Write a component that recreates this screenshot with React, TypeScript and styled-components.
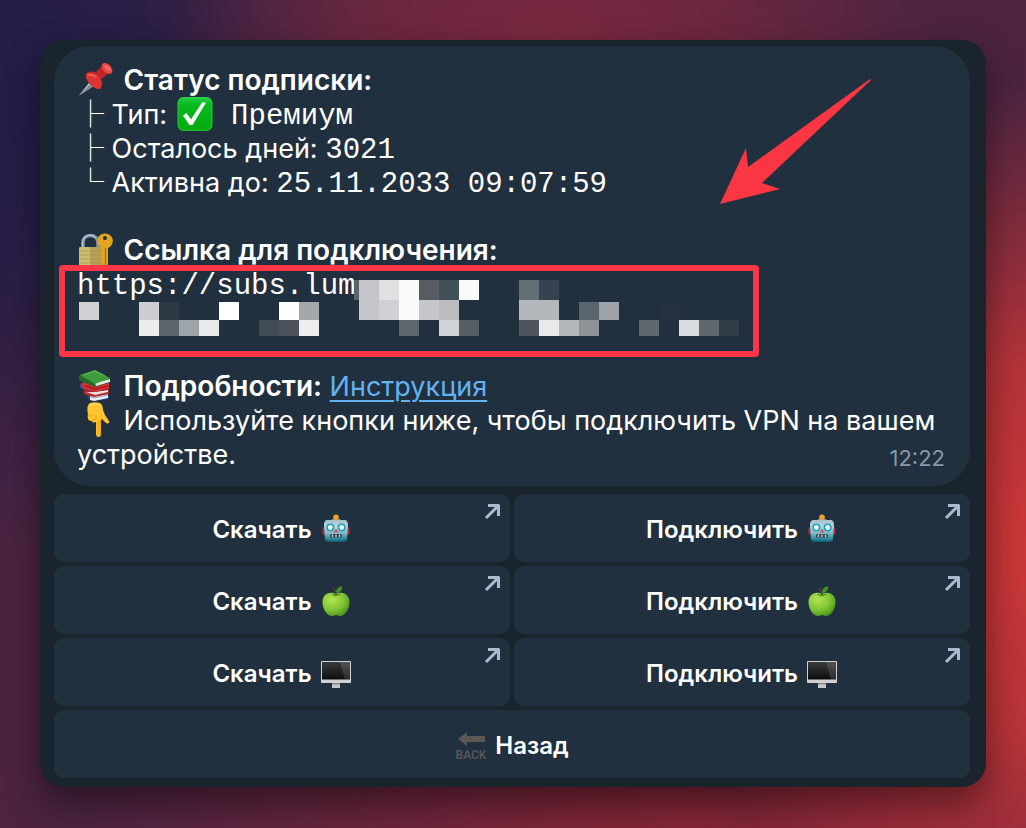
import React from "react";
import styled, { createGlobalStyle } from "styled-components";

const GlobalStyle = createGlobalStyle`
  * { box-sizing: border-box; }
  html, body { margin: 0; }
  body {
    font-family: Inter, "Noto Sans", sans-serif;
    color: #ffffff;
    background: #48223e;
  }
`;

const Desktop = styled.main`
  min-height: 100vh;
  padding: 40px;
  background:
    radial-gradient(ellipse 34% 56% at 101% 66%, #cd3737 0%, rgba(205, 55, 55, 0.8) 40%, rgba(205, 55, 55, 0) 100%),
    radial-gradient(ellipse 38% 60% at 54% 12%, #7c293e 0%, rgba(124, 41, 62, 0.7) 40%, rgba(124, 41, 62, 0) 100%),
    radial-gradient(ellipse 32% 56% at 2% 12%, #221d47 0%, rgba(34, 29, 71, 0.8) 40%, rgba(34, 29, 71, 0) 100%),
    radial-gradient(ellipse 60% 40% at 68% 104%, #8c2636 0%, rgba(140, 38, 54, 0) 100%),
    #4c2441;
`;

const Window = styled.section`
  padding: 6px 16px 9px 14px;
  border-radius: 24px;
  background: #19242d;
  box-shadow: 0 16px 36px rgba(0, 0, 0, 0.45);
`;

const Message = styled.article`
  position: relative;
  padding: 18px 23px 14px;
  border-radius: 36px;
  background: #21303f;
  font-size: 27px;
  line-height: 34px;
`;

const Block = styled.div`
  position: relative;
  margin-bottom: 34px;
`;

const Line = styled.p`
  margin: 0;
`;

const Strong = styled.strong`
  font-size: 28px;
  font-weight: 600;
  line-height: 1;
`;

const Mono = styled.code`
  font-family: "Liberation Mono", monospace;
  font-size: 29px;
  line-height: 1;
  white-space: pre;
`;

const Branch = styled.span<{ $heavy?: boolean }>`
  font-family: "Noto Sans CJK JP", sans-serif;
  font-weight: ${(p) => (p.$heavy ? 700 : 400)};
  line-height: 1;
`;

const Glyph = styled.svg<{ $size: number; $lead?: number; $gap?: number }>`
  display: inline-block;
  flex: none;
  width: ${(p) => p.$size}px;
  height: ${(p) => p.$size}px;
  margin: -4px ${(p) => p.$gap ?? 0}px -4px ${(p) => p.$lead ?? 0}px;
  vertical-align: -4px;
`;

const Link = styled.a`
  color: #62b2f2;
  text-decoration: underline;
  text-decoration-thickness: 2px;
  text-underline-offset: 4px;
`;

const Time = styled.time`
  float: right;
  margin-right: 2px;
  padding-top: 9px;
  font-size: 22px;
  line-height: 22px;
  color: #8798a8;
`;

const Frame = styled.div`
  position: absolute;
  top: 31px;
  left: -18px;
  width: 700px;
  height: 92px;
  border: 6px solid #fa3746;
  border-radius: 4px;
`;

const Mosaic = styled.svg`
  position: absolute;
  top: 46px;
  left: 0;
  width: 664px;
  height: 56px;
`;

const Pointer = styled.svg`
  position: absolute;
  top: 33px;
  right: 98px;
  width: 152px;
  height: 126px;
`;

const Keyboard = styled.div`
  display: grid;
  grid-template-columns: 1fr 1fr;
  gap: 4px;
  margin-top: 8px;
`;

const Key = styled.button<{ $wide?: boolean }>`
  position: relative;
  grid-column: ${(p) => (p.$wide ? "1 / -1" : "auto")};
  display: flex;
  align-items: center;
  justify-content: center;
  gap: 8px;
  height: 68px;
  padding: 4px 0 0;
  border: 0;
  border-radius: 10px;
  background: #21303f;
  color: #ffffff;
  font-family: inherit;
  font-size: 24px;
  font-weight: 600;
  line-height: 32px;
  cursor: pointer;
`;

const Corner = styled.svg`
  position: absolute;
  top: 9px;
  right: 9px;
  width: 17px;
  height: 17px;
`;

type IconProps = { size?: number; lead?: number; gap?: number };

const Pin = ({ size = 36, gap }: IconProps) => (
  <Glyph $size={size} $gap={gap} viewBox="0 0 36 36" aria-hidden="true">
    <path d="M2 33.500 15 17l5 5Z" fill="#b4bdc4" />
    <path d="M2 33.500 17 19l3 3Z" fill="#7d8a94" />
    <path d="M9 12c3-3 8-3 11-1l5-5c-1-3 1-5 4-5 4 1 6 5 6 8-1 3-4 3-6 3l-5 5c2 3 2 7-1 10C16 27 8 19 9 12Z" fill="#c0282b" />
    <path d="M9 12c4-2 9-1 12 2 3 3 4 9 2 13C16 27 8 19 9 12Z" fill="#dd3634" />
    <path d="M19 10l5-5 6 7-5 5Z" fill="#c3262a" />
    <ellipse cx="30" cy="6.500" rx="4" ry="6.500" transform="rotate(-43 30 6.500)" fill="#e94542" />
    <ellipse cx="30.500" cy="6" rx="2" ry="4" transform="rotate(-43 30.500 6)" fill="#f3665f" />
    <path d="M11 13c3-1 6 0 8 2" stroke="#f26b65" strokeWidth="1.500" fill="none" />
  </Glyph>
);

const Check = ({ size = 36, lead, gap }: IconProps) => (
  <Glyph $size={size} $lead={lead} $gap={gap} viewBox="0 0 36 36" aria-hidden="true">
    <defs>
      <linearGradient id="check-fill" x1="0" y1="0" x2="0" y2="1">
        <stop offset="0" stopColor="#24cf45" />
        <stop offset="0.250" stopColor="#07b91c" />
        <stop offset="1" stopColor="#04ab10" />
      </linearGradient>
    </defs>
    <rect x="0.500" y="1" width="35" height="34" rx="6" fill="url(#check-fill)" />
    <rect x="1.200" y="1.700" width="33.600" height="32.600" rx="5.500" fill="none" stroke="#3fdc5a" strokeOpacity="0.500" />
    <path d="M6 19.500 9.500 17l4.500 6.500L25 6.500h4L15.500 29h-3Z" fill="#ffffff" />
  </Glyph>
);

const Lock = ({ size = 36, gap }: IconProps) => (
  <Glyph $size={size} $gap={gap} viewBox="0 0 36 36" aria-hidden="true">
    <path d="M6 16V11C6 1 21 1 21 11v5" fill="none" stroke="#7d94a5" strokeWidth="3.500" />
    <path d="M5.500 15v-4c0-8 9-10 13-5" fill="none" stroke="#b9c8d2" strokeWidth="1.300" />
    <rect x="2" y="15" width="24" height="20" rx="1.500" fill="#b5a355" />
    <rect x="2" y="15" width="11" height="20" rx="1.500" fill="#cbbd70" />
    <path d="M3 19h22M3 23h22M3 27h22M3 31h22" stroke="#96823a" strokeOpacity="0.450" />
    <path fillRule="evenodd" d="M28 1.500a7.500 7.500 0 0 1 3 14.500v17l-3 3-3-3v-3l-2-2 2-2v-3l-2-2 2-2v-3a7.500 7.500 0 0 1 3-14.500Zm0 2.500a2 2 0 1 0 0 4 2 2 0 0 0 0-4Z" fill="#e2a51d" />
    <path d="M28.500 16v18" stroke="#ab7009" strokeWidth="1.300" />
  </Glyph>
);

const Books = ({ size = 36, gap }: IconProps) => (
  <Glyph $size={size} $gap={gap} viewBox="0 0 36 36" aria-hidden="true">
    <path d="M12 27c-2 1-2 4 1 5l4 1 15-2v-2l-1-4Z" fill="#25408f" />
    <path d="m13 28 18-2v4l-14 3-4-1Z" fill="#e8edf2" />
    <path d="M13 28.500 17 30l14-3" stroke="#9aa6b3" fill="none" />
    <path d="M4 15c-2 2-1 5 2 6l6 2v-4Z" fill="#3454b4" />
    <path d="M8 22c-2 1-1 4 1 5l8 2 15-3v-4l-14 2Z" fill="#b8262e" />
    <path d="m9 24 9 3 13-3v-2l-13 2Z" fill="#ecdede" />
    <path d="M6 14c-2 2-1 6 1 7l11 3 14-3v-6l-14 3Z" fill="#d3302f" />
    <path d="m8 18 10 3 13-3" stroke="#a91d25" strokeWidth="1.500" fill="none" />
    <path d="M3 7c-2 2-1 5 1 6l14 6 15-5V10Z" fill="#1f6b2b" />
    <path d="m18 15 15-4v3l-14 4Z" fill="#dfe9e2" />
    <path d="M3 7 18 2l15 8-15 6Z" fill="#3f9c3c" />
    <path d="m7 7 11-4 10 5" stroke="#62b458" strokeWidth="1.300" fill="none" />
  </Glyph>
);

const Finger = ({ size = 36, gap }: IconProps) => (
  <Glyph $size={size} $gap={gap} viewBox="0 0 36 36" aria-hidden="true">
    <path d="M13 1c3-1 7-1 10 0 2 1 3 4 3 7l2 5 4 6c1 2-1 3-3 2l-4-4-1 1v14c0 4-5 4-5 0V20c-3 1-4 0-4-1-3 0-4-1-4-3-1-2 0-3 0-4-1-4-1-9 2-11Z" fill="#ffc531" />
    <path d="M20 19v13c0 3 4 3 4 0V17Z" fill="#f7b01d" />
    <path d="M11.500 12.500c1 2 3.500 2 4.500 0M15 17c1 2 4 2 4-1v-3" fill="none" stroke="#e39a1c" />
    <path d="M13 3c3-1 6-1 9 0" fill="none" stroke="#ffd968" strokeWidth="1.500" />
  </Glyph>
);

const Robot = ({ size = 32 }: IconProps) => (
  <Glyph $size={size} viewBox="0 0 32 32" aria-hidden="true">
    <defs>
      <linearGradient id="robot-fill" x1="0" y1="0" x2="0" y2="1">
        <stop offset="0" stopColor="#a9c3ce" />
        <stop offset="0.300" stopColor="#b6d3dc" />
        <stop offset="0.600" stopColor="#7fb8ca" />
        <stop offset="0.850" stopColor="#2f8ca3" />
        <stop offset="1" stopColor="#125a66" />
      </linearGradient>
    </defs>
    <rect x="2.500" y="13" width="27" height="8" rx="2" fill="#a62f35" />
    <path d="M12 5h8l1 3H11Z" fill="#6fa1b5" />
    <circle cx="16" cy="3.300" r="2.800" fill="#f0a12b" />
    <path d="M8 6h16c3 0 4 2 4 5l-1 14c0 2-2 3-4 3H9c-2 0-4-1-4-3L4 11c0-3 1-5 4-5Z" fill="url(#robot-fill)" />
    <circle cx="10.300" cy="13.500" r="4" fill="#1fa0bd" />
    <circle cx="21.700" cy="13.500" r="4" fill="#1fa0bd" />
    <circle cx="10.300" cy="13.500" r="2.400" fill="#f4ffff" />
    <circle cx="21.700" cy="13.500" r="2.400" fill="#f4ffff" />
    <path d="m16 14.500 2.500 4h-5Z" fill="#d7574b" />
    <rect x="10" y="20" width="12" height="3.500" rx="1.500" fill="#37434c" />
    <path d="M12.500 20.500v2.500M16 20.500v2.500M19.500 20.500v2.500" stroke="#cfe4ea" strokeWidth="1.200" />
  </Glyph>
);

const Apple = ({ size = 32 }: IconProps) => (
  <Glyph $size={size} viewBox="0 0 32 32" aria-hidden="true">
    <defs>
      <radialGradient id="apple-fill" cx="0.350" cy="0.300" r="0.750">
        <stop offset="0" stopColor="#b2e556" />
        <stop offset="0.600" stopColor="#7fc433" />
        <stop offset="1" stopColor="#4c941b" />
      </radialGradient>
    </defs>
    <path d="M16 8c5-3 13.500-1 13.500 8 0 7-4.500 14-9.500 14-2 0-3-1-4-1s-2 1-4 1C7 30 2.500 23 2.500 16 2.500 7 11 5 16 8Z" fill="url(#apple-fill)" />
    <path d="M12 8c2 2 5 2 8 0" stroke="#4c8820" strokeWidth="1.200" fill="none" />
    <path d="M16 9c0-3-1-5-3-7" stroke="#703b25" strokeWidth="1.300" fill="none" />
    <path d="M16 7c0-4 2-6 6-7 1 4-2 7-6 7Z" fill="#3f9226" />
  </Glyph>
);

const Monitor = ({ size = 32 }: IconProps) => (
  <Glyph $size={size} viewBox="0 0 32 32" aria-hidden="true">
    <defs>
      <linearGradient id="screen-fill" x1="0" y1="0" x2="0" y2="1">
        <stop offset="0" stopColor="#3a3b3d" />
        <stop offset="1" stopColor="#0c0d0e" />
      </linearGradient>
    </defs>
    <path d="M12 24h8v6h-8Z" fill="#c6c7c8" />
    <rect x="1" y="3" width="30" height="22" rx="0.800" fill="#cfd0d1" />
    <rect x="2" y="4" width="28" height="17.500" fill="url(#screen-fill)" />
    <path d="M20 4h10v17.500h-5Z" fill="#ffffff" fillOpacity="0.120" />
    <path d="M12 25h8v1.500h-8Z" fill="#8b8d8f" />
  </Glyph>
);

const Back = ({ size = 32 }: IconProps) => (
  <Glyph $size={size} viewBox="0 0 32 32" aria-hidden="true">
    <path d="m3 9 9-7v4h18v6H12v4Z" fill="#5a5856" />
    <text x="16" y="29" textAnchor="middle" fontFamily="Roboto, sans-serif" fontSize="12" fontWeight="500" fill="#5a5856">
      BACK
    </text>
  </Glyph>
);

const External = () => (
  <Corner viewBox="0 0 17 17" aria-hidden="true">
    <path d="M4 2.500h10.500V13M14 3 2 15" fill="none" stroke="#a9bccf" strokeWidth="3" strokeLinejoin="round" />
  </Corner>
);

// Hidden part of the address: x, y, width, height, colour
const cells: [number, number, number, number, string][] = [
  [277, 0, 5, 20, "#5a646c"],
  [282, 0, 20, 40, "#c4c6c9"],
  [302, 0, 20, 20, "#dfe0e2"],
  [302, 20, 20, 20, "#d0d1d4"],
  [322, 0, 20, 40, "#fafafa"],
  [342, 0, 20, 20, "#565c61"],
  [342, 20, 20, 20, "#c5c6c9"],
  [362, 0, 20, 20, "#42505a"],
  [362, 20, 20, 20, "#bcbcbf"],
  [382, 0, 20, 20, "#fafafa"],
  [442, 0, 20, 20, "#656d75"],
  [442, 20, 20, 20, "#b4b8bc"],
  [462, 0, 20, 20, "#34434f"],
  [462, 20, 20, 20, "#b4b7ba"],
  [502, 22, 20, 18, "#5a6570"],
  [522, 22, 20, 18, "#9fa3a8"],
  [582, 22, 20, 18, "#243140"],
  [322, 40, 20, 16, "#5e656b"],
  [362, 40, 20, 16, "#d0d4d7"],
  [382, 40, 20, 16, "#575e64"],
  [442, 40, 20, 16, "#4e555e"],
  [462, 40, 20, 16, "#e8e9ea"],
  [482, 40, 20, 16, "#b3b7bb"],
  [502, 40, 20, 16, "#8d9297"],
  [562, 40, 20, 16, "#5f666d"],
  [602, 40, 20, 16, "#d9dddf"],
  [622, 40, 20, 16, "#60686e"],
  [642, 40, 20, 16, "#303d49"],
  [2, 22, 20, 18, "#cfd1d3"],
  [62, 22, 20, 18, "#cbcdd0"],
  [82, 22, 20, 18, "#2c3945"],
  [142, 22, 20, 18, "#ffffff"],
  [202, 22, 20, 18, "#ffffff"],
  [222, 22, 20, 18, "#a5a8ab"],
  [62, 40, 20, 16, "#ececed"],
  [82, 40, 20, 16, "#5c636b"],
  [102, 40, 20, 16, "#9ea5a9"],
  [122, 40, 20, 16, "#e9eaeb"],
  [182, 40, 20, 16, "#414b56"],
  [202, 40, 20, 16, "#4c525b"],
  [222, 40, 20, 16, "#eceeef"],
];

const platforms = [
  { name: "android", Icon: Robot },
  { name: "apple", Icon: Apple },
  { name: "desktop", Icon: Monitor },
];

export default function App() {
  return (
    <>
      <GlobalStyle />
      <Desktop>
        <Window>
          <Message>
            <Block>
              <Line>
                <Pin gap={3} /> <Strong>Статус подписки:</Strong>
              </Line>
              <Line>
                <Branch>├</Branch> Тип: <Check lead={2} gap={1} />
                <Mono> Премиум</Mono>
              </Line>
              <Line>
                <Branch>├</Branch> Осталось дней: <Mono>3021</Mono>
              </Line>
              <Line>
                <Branch $heavy>└</Branch> Активна до: <Mono>25.11.2033 09:07:59</Mono>
              </Line>
            </Block>
            <Block>
              <Line>
                <Lock gap={3} /> <Strong>Ссылка для подключения:</Strong>
              </Line>
              <Line>
                <Mono>https://subs.lum</Mono>
              </Line>
              <Line>&nbsp;</Line>
              <Mosaic viewBox="0 0 664 56" shapeRendering="crispEdges" aria-hidden="true">
                {cells.map(([x, y, w, h, fill]) => (
                  <rect key={`${x}-${y}`} x={x} y={y} width={w} height={h} fill={fill} />
                ))}
              </Mosaic>
              <Frame />
            </Block>
            <Line>
              <Books gap={3} /> <Strong>Подробности:</Strong> <Link href="#guide">Инструкция</Link>
            </Line>
            <Line>
              <Finger gap={3} /> Используйте кнопки ниже, чтобы подключить VPN на вашем устройстве.
              <Time>12:22</Time>
            </Line>
            <Pointer viewBox="0 0 152 126" aria-hidden="true">
              <path d="M0 125 26 69l2 19L150 0l1 1L42 104l18 6Z" fill="#fb3643" />
            </Pointer>
          </Message>
          <Keyboard>
            {platforms.map(({ name, Icon }) => (
              <React.Fragment key={name}>
                <Key type="button">
                  Скачать <Icon />
                  <External />
                </Key>
                <Key type="button">
                  Подключить <Icon />
                  <External />
                </Key>
              </React.Fragment>
            ))}
            <Key type="button" $wide>
              <Back /> Назад
            </Key>
          </Keyboard>
        </Window>
      </Desktop>
    </>
  );
}
